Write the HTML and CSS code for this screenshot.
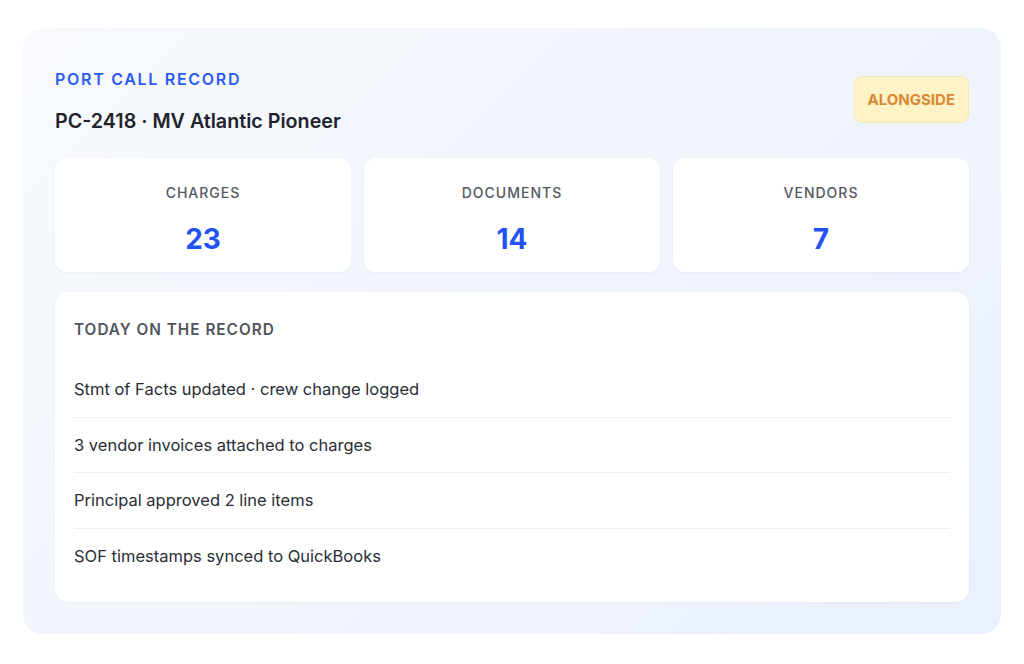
FILE: index.html
```html
<!DOCTYPE html>
<html lang="en">
<head>
<meta charset="utf-8">
<title>Port Call Record</title>
<link rel="stylesheet" href="styles.css">
</head>
<body>
<main class="record">
  <header class="record-head">
    <div class="titles">
      <div class="eyebrow">PORT CALL RECORD</div>
      <h1 class="title">PC-2418 · MV Atlantic Pioneer</h1>
    </div>
    <span class="badge">ALONGSIDE</span>
  </header>
  <section class="stats">
    <div class="stat"><div class="stat-label">CHARGES</div><div class="stat-value">23</div></div>
    <div class="stat"><div class="stat-label">DOCUMENTS</div><div class="stat-value">14</div></div>
    <div class="stat"><div class="stat-label">VENDORS</div><div class="stat-value">7</div></div>
  </section>
  <section class="today">
    <h2 class="today-title">TODAY ON THE RECORD</h2>
    <ul class="items">
      <li>Stmt of Facts updated · crew change logged</li>
      <li>3 vendor invoices attached to charges</li>
      <li>Principal approved 2 line items</li>
      <li>SOF timestamps synced to QuickBooks</li>
    </ul>
  </section>
</main>
</body>
</html>
```
FILE: styles.css
```css
* { box-sizing: border-box; }
html, body { margin: 0; background: #ffffff; }
body {
  padding: 28px 23px;
  font-family: Inter, "Noto Sans", "Liberation Sans", sans-serif;
  color: #1f2330;
}
.record {
  border-radius: 20px;
  background: linear-gradient(135deg, #f7f9fd 0%, #f1f5fc 50%, #e9f0fd 100%);
  padding: 32px 32px 32px;
}
.record-head {
  display: flex;
  justify-content: space-between;
  align-items: center;
  margin-bottom: 20px;
}
.eyebrow {
  font-size: 16px;
  line-height: 20px;
  font-weight: 600;
  letter-spacing: 1.7px;
  color: #2b5cf2;
  padding-top: 9px;
}
.title {
  margin: 18px 0 0;
  font-size: 19.7px;
  line-height: 28px;
  font-weight: 600;
  color: #1f232d;
  padding-bottom: 3px;
}
.badge {
  display: inline-block;
  background: #fdf3c6;
  border: 1px solid #f6e7ad;
  border-radius: 8px;
  padding: 13px 13px;
  font-size: 15px;
  line-height: 19px;
  font-weight: 700;
  color: #d98833;
}
.stats {
  display: grid;
  grid-template-columns: repeat(3, 1fr);
  gap: 13px;
  margin-bottom: 20px;
}
.stat {
  background: #ffffff;
  border-radius: 12px;
  height: 114px;
  padding: 25px 16px 0;
  text-align: center;
  box-shadow: 0 1px 3px rgba(30, 50, 90, 0.05);
}
.stat-label {
  font-size: 14px;
  line-height: 20px;
  font-weight: 500;
  letter-spacing: 1px;
  color: #545861;
}
.stat-value {
  margin-top: 19px;
  font-size: 28px;
  line-height: 34px;
  font-weight: 700;
  color: #2452f0;
}
.today {
  background: #ffffff;
  border-radius: 14px;
  padding: 29px 19px 19px;
  box-shadow: 0 1px 3px rgba(30, 50, 90, 0.05);
}
.today-title {
  margin: 0;
  font-size: 15.3px;
  line-height: 18px;
  font-weight: 600;
  letter-spacing: 1px;
  color: #50545c;
}
.items {
  list-style: none;
  margin: 23px 0 0;
  padding: 0;
}
.items li {
  font-size: 16.5px;
  line-height: 19px;
  padding: 18px 0 17.5px;
  color: #2a2d35;
  border-bottom: 1px solid #eceef2;
}
.items li:last-child { border-bottom: none; }
```
